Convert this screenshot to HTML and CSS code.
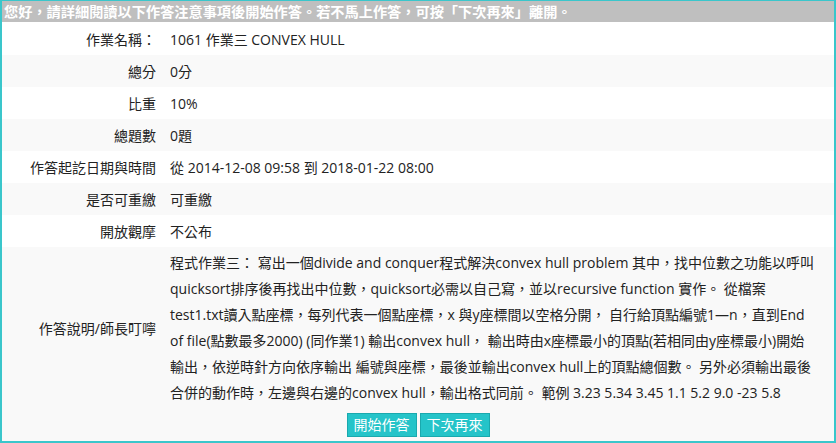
FILE: index.html
```html
<!DOCTYPE html>
<html lang="zh-Hant">
<head>
<meta charset="utf-8">
<title>作業</title>
<link rel="stylesheet" href="styles.css">
</head>
<body>
<div class="panel">
  <div class="notice">您好，請詳細閱讀以下作答注意事項後開始作答。若不馬上作答，可按「下次再來」離開。</div>
  <div class="rows">
    <div class="row"><div class="label">作業名稱：</div><div class="value">1061 作業三 CONVEX HULL</div></div>
    <div class="row alt"><div class="label">總分</div><div class="value">0分</div></div>
    <div class="row"><div class="label">比重</div><div class="value">10%</div></div>
    <div class="row alt"><div class="label">總題數</div><div class="value">0題</div></div>
    <div class="row"><div class="label">作答起訖日期與時間</div><div class="value">從 2014-12-08 09:58 到 2018-01-22 08:00</div></div>
    <div class="row alt"><div class="label">是否可重繳</div><div class="value">可重繳</div></div>
    <div class="row"><div class="label">開放觀摩</div><div class="value">不公布</div></div>
    <div class="row alt desc-row"><div class="label">作答說明/師長叮嚀</div><div class="value desc">程式作業三： 寫出一個divide and conquer程式解決convex hull problem 其中，找中位數之功能以呼叫<br>quicksort排序後再找出中位數，quicksort必需以自己寫，並以recursive function 實作。 從檔案<br>test1.txt讀入點座標，每列代表一個點座標，x 與y座標間以空格分開， 自行給頂點編號1—n，直到End<br>of file(點數最多2000) (同作業1) 輸出convex hull， 輸出時由x座標最小的頂點(若相同由y座標最小)開始<br>輸出，依逆時針方向依序輸出 編號與座標，最後並輸出convex hull上的頂點總個數。 另外必須輸出最後<br>合併的動作時，左邊與右邊的convex hull，輸出格式同前。 範例 3.23 5.34 3.45 1.1 5.2 9.0 -23 5.8</div></div>
    <div class="actions">
      <button class="btn" type="button">開始作答</button>
      <button class="btn" type="button">下次再來</button>
    </div>
  </div>
</div>
</body>
</html>
```

FILE: styles.css
```css
html, body {
  margin: 0;
  padding: 0;
  background: #ffffff;
}
body {
  font-family: "Open Sans", "Noto Sans CJK TC", sans-serif;
  font-size: 14px;
  color: #222;
}
.panel {
  width: 836px;
  height: 443px;
  box-sizing: border-box;
  border: 2px solid #3ac6cb;
  border-top-width: 1px;
  display: flex;
  flex-direction: column;
  background: #fff;
}
.notice {
  background: #bfbfbf;
  color: #fff;
  font-weight: bold;
  font-size: 14.2px;
  height: 21px;
  line-height: 21px;
  padding-left: 2px;
  white-space: nowrap;
  overflow: hidden;
}
.rows {
  flex: 1;
  display: flex;
  flex-direction: column;
}
.row {
  display: grid;
  grid-template-columns: 168px 1fr;
  align-items: center;
  height: 32px;
  background: #fff;
}
.row:first-child {
  height: 33px;
}
.row.alt {
  background: #f9f9f9;
}
.label {
  text-align: right;
  padding-right: 14px;
  white-space: nowrap;
}
.value {
  white-space: nowrap;
}
.desc-row {
  height: auto;
  padding: 3px 0 3px;
}
.desc {
  line-height: 26px;
}
.actions {
  flex: 1;
  display: flex;
  justify-content: center;
  align-items: center;
  gap: 3px;
  background: #f9f9f9;
}
.btn {
  font-family: "Open Sans", "Noto Sans CJK TC", sans-serif;
  font-size: 14px;
  color: #fff;
  background: #25c4c9;
  border: 1px solid #1aa9ae;
  height: 24px;
  padding: 0 6px;
  line-height: 20px;
  margin: 0;
  cursor: pointer;
}
```
